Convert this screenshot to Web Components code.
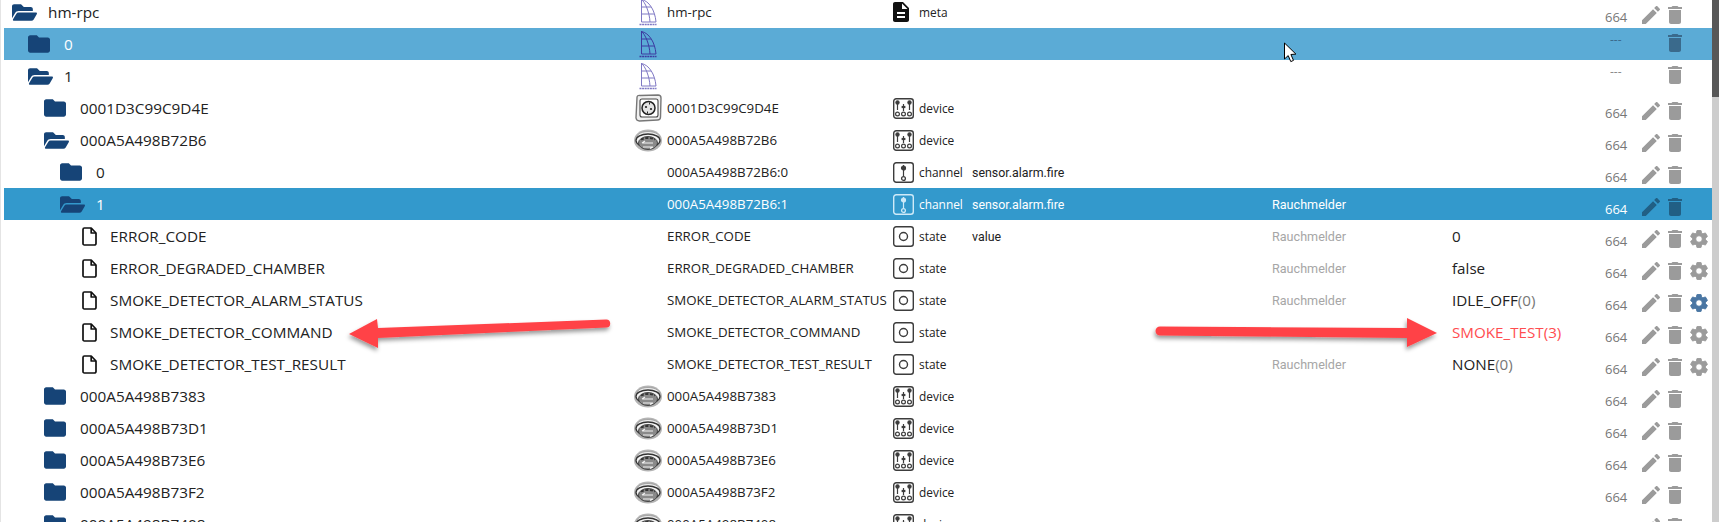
<!DOCTYPE html>
<html>
<head>
<meta charset="utf-8">
<title>Objects</title>
<style>
  html, body { margin: 0; height: 100%; overflow: hidden; background: #fff; }
  body { font-family: "Open Sans", "Liberation Sans", sans-serif; color: #222; }
</style>
</head>
<body>
<object-browser></object-browser>

<script>
const ICONS = {
  folder: `<svg width="22" height="18" viewBox="2 4 20 16" fill="#164477"><path d="M10 4H4c-1.1 0-2 .9-2 2v12c0 1.1.9 2 2 2h16c1.1 0 2-.9 2-2V8c0-1.1-.9-2-2-2h-8l-2-2z"/></svg>`,
  open: `<svg width="25" height="17" viewBox="0 64 576 384" fill="#164477"><path d="M572.694 292.093L500.27 416.248A63.997 63.997 0 0 1 444.989 448H45.025c-18.523 0-30.064-20.093-20.731-36.093l72.424-124.155A64 64 0 0 1 152 256h399.964c18.523 0 30.064 20.093 20.73 36.093zM152 224h328v-48c0-26.51-21.49-48-48-48H272l-64-64H48C21.49 64 0 85.49 0 112v278.046l69.077-118.418C86.214 242.25 117.989 224 152 224z"/></svg>`,
  file: `<svg width="15" height="19" viewBox="0 0 15 19" fill="none" stroke="#111" stroke-width="1.7" stroke-linejoin="round"><path d="M2.4 1h6.8l4.8 5v10.4a1.6 1.6 0 0 1-1.6 1.6H2.4A1.4 1.4 0 0 1 1 16.4V2.4A1.4 1.4 0 0 1 2.4 1z"/><path d="M9.2 1v5h4.8"/></svg>`,
  meta: `<svg width="16" height="20" viewBox="4 2 16 20" fill="#111"><path d="M14 2H6c-1.1 0-1.99.9-1.99 2L4 20c0 1.1.89 2 1.99 2H18c1.1 0 2-.9 2-2V8l-6-6zm2 16H8v-2h8v2zm0-4H8v-2h8v2zm-3-5V3.5L18.5 9H13z"/></svg>`,
  device: `<svg width="21" height="21" viewBox="0 0 21 21" fill="none" stroke="currentColor" stroke-width="1.2"><rect x="0.7" y="0.7" width="19.6" height="19.6" rx="2.5" stroke-width="1.4"/><path d="M4.5 3v9M10.5 6v7M16.5 3v9"/><circle cx="4.5" cy="4.5" r="1.6" fill="currentColor"/><path d="M8.6 9h3.8" stroke-width="2.2"/><circle cx="16.5" cy="4.5" r="1.6" fill="currentColor"/><circle cx="4.5" cy="16" r="1.9"/><circle cx="10.5" cy="16" r="1.9"/><circle cx="16.5" cy="16" r="1.9"/></svg>`,
  channel: `<svg width="21" height="21" viewBox="0 0 21 21" fill="none" stroke="currentColor" stroke-width="1.2"><rect x="0.7" y="0.7" width="19.6" height="19.6" rx="2.5" stroke-width="1.4"/><path d="M10.5 3v11"/><circle cx="10.5" cy="6" r="2" fill="currentColor"/><circle cx="10.5" cy="16.5" r="1.9" stroke-width="1.3"/></svg>`,
  state: `<svg width="21" height="21" viewBox="0 0 21 21" fill="none" stroke="currentColor"><rect x="0.7" y="0.7" width="19.6" height="19.6" rx="2.5" stroke-width="1.4"/><circle cx="10.5" cy="10.5" r="4" stroke-width="1.4"/></svg>`,
  edit: `<svg width="18" height="18" viewBox="3 3 18 18" fill="currentColor"><path d="M3 17.25V21h3.75L17.81 9.94l-3.75-3.75L3 17.25zM20.71 7.04c.39-.39.39-1.02 0-1.41l-2.34-2.34c-.39-.39-1.02-.39-1.41 0l-1.83 1.83 3.75 3.75 1.83-1.83z"/></svg>`,
  trash: `<svg width="14" height="18" viewBox="5 3 14 18" fill="currentColor"><path d="M6 19c0 1.1.9 2 2 2h8c1.1 0 2-.9 2-2V7H6v12zM19 4h-3.5l-1-1h-5l-1 1H5v2h14V4z"/></svg>`,
  gear: `<svg width="18" height="18" viewBox="2.5 2 19 20" fill="currentColor" stroke="currentColor" stroke-width="1"><path d="M19.14 12.94c.04-.3.06-.61.06-.94 0-.32-.02-.64-.07-.94l2.03-1.58c.18-.14.23-.41.12-.61l-1.92-3.32c-.12-.22-.37-.29-.59-.22l-2.39.96c-.5-.38-1.03-.7-1.62-.94l-.36-2.54c-.04-.24-.24-.41-.48-.41h-3.84c-.24 0-.43.17-.47.41l-.36 2.54c-.59.24-1.13.57-1.62.94l-2.39-.96c-.22-.08-.47 0-.59.22L2.74 8.87c-.12.21-.08.47.12.61l2.03 1.58c-.05.3-.09.63-.09.94s.02.64.07.94l-2.03 1.58c-.18.14-.23.41-.12.61l1.92 3.32c.12.22.37.29.59.22l2.39-.96c.5.38 1.03.7 1.62.94l.36 2.54c.05.24.24.41.48.41h3.84c.24 0 .44-.17.47-.41l.36-2.54c.59-.24 1.13-.56 1.62-.94l2.39.96c.22.08.47 0 .59-.22l1.92-3.32c.12-.22.07-.47-.12-.61l-2.01-1.58zM12 15.6c-1.98 0-3.6-1.62-3.6-3.6s1.62-3.6 3.6-3.6 3.6 1.62 3.6 3.6-1.62 3.6-3.6 3.6z"/></svg>`,
  logo: `<svg width="20" height="28" viewBox="0 0 20 28" fill="none" stroke="var(--logo, #7f78c4)" stroke-width="1"><path d="M3.5 1v23h14.5M3.5 1.500C11 3 17 12 18 24M3.5 1.500C7 4 11.5 14 12 24M3.5 9h9.500M3.5 16h13"/><path d="M1.500 26.500h17" stroke-width="1.600" stroke-dasharray="2 0.600"/></svg>`,
  socket: `<svg width="28" height="28" viewBox="0 0 28 28"><path d="M3 3.500Q3 1 6 1.500L24 1q3 0 3 3l-.5 19q0 3-3 3l-18 1q-3 0-3.500-3z" fill="#f0f0f0" stroke="#777" stroke-width="1.400"/><rect x="6" y="5" width="18" height="18" rx="2" fill="#fff" stroke="#444" stroke-width="1.100"/><circle cx="14.500" cy="14" r="6.500" fill="#e4e4e4" stroke="#222" stroke-width="1.500"/><circle cx="12" cy="13" r="1.100" fill="#222"/><circle cx="17" cy="15" r="1.100" fill="#222"/><path d="M15.500 8.500v2M13.500 17.500v2" stroke="#222"/></svg>`,
  smoke: `<svg width="28" height="24" viewBox="0 0 28 24"><ellipse cx="14" cy="12.500" rx="14" ry="11" fill="#b4b4b4"/><path d="M2.500 9.500C4 1.500 24 1.500 26 9.500c-6-4-18-4-23.500 0z" fill="#ededed" stroke="#999" stroke-width="0.800"/><ellipse cx="14" cy="12.500" rx="12" ry="6.500" fill="#f4f4f4" stroke="#333" stroke-width="1.300"/><ellipse cx="14" cy="15" rx="9.500" ry="6.500" fill="#8a8a8a" stroke="#3a3a3a" stroke-width="0.900"/><path d="M7 11.500c4-2 10-2 14 0" fill="none" stroke="#333" stroke-width="1.800" stroke-dasharray="3 1.500"/><path d="M8 15h11M8 15l3-2M9 19h10l-3 1.500" fill="none" stroke="#f2f2f2" stroke-width="1.100"/></svg>`
};

class ScrollBar extends HTMLElement {
  constructor() {
    super();
    this.attachShadow({ mode: "open" });
    this.shadowRoot.innerHTML = `
      <style>
        :host { display: block; width: 7px; background: #cdcdcd; flex: none; }
        div { height: 97px; background: #585858; }
      </style>
      <div></div>`;
  }
}
customElements.define("scroll-bar", ScrollBar);

class ObjectRow extends HTMLElement {
  constructor() {
    super();
    this.attachShadow({ mode: "open" });
  }

  set data(d) {
    const pad = 8 + d.level * 16;
    const isLeaf = d.kind === "file";
    const actionShift = d.edit === false ? -1 : 3;
    this.className = d.style || "";
    this.shadowRoot.innerHTML = `
      <style>
        :host {
          display: grid;
          grid-template-columns: 630px 33px 226px 26px 53px 300px 180px 153px 37px 72px;
          height: 32px;
          align-items: center;
          white-space: nowrap;
          color: #222;
          --trash: #9b9b9b;
        }
        :host(.hover) { background: #5babd6; color: #fff; --trash: #3a6a8c; --muted: #fff; --logo: #3c3aa0; }
        :host(.selected) { background: #3399cc; color: #fff; --trash: #215f84; --muted: #fff; }
        .name { display: flex; align-items: center; font-size: 15.3px; padding-left: ${pad}px; }
        .name .ic { width: ${isLeaf ? 28 : 36}px; display: flex; margin-left: ${isLeaf ? 6 : 0}px; }
        .pic { display: flex; justify-content: center; width: 28px; }
        .id { font-size: 13.3px; }
        .type-ic { display: flex; color: #3c3c3c; }
        :host(.selected) .type-ic { color: #cfeaf8; }
        .type { font-size: 11.9px; }
        .role { font-family: Roboto, "Open Sans", sans-serif; font-size: 12.4px; }
        .room { font-family: Roboto, "Open Sans", sans-serif; font-size: 12.6px; color: var(--muted, #a6a6a6); }
        .value { font-size: 15.2px; }
        .value i { font-style: normal; color: #777; }
        .value.alert, .value.alert i { color: #ff4d50; }
        .mode { font-size: 13px; color: var(--muted, #777); position: relative; top: 5px; }
        .dash { font-size: 12px; color: #8a8a8a; margin-left: 5px; position: relative; top: -5px; }
        :host(.hover) .dash, :host(.selected) .dash { color: #3a6a8c; }
        .acts { display: flex; align-items: center; gap: 8px; position: relative; top: ${actionShift}px; color: #9b9b9b; }
        :host(.selected) .acts { color: #215f84; }
        .acts .p { width: 18px; display: flex; }
        .acts .t { display: flex; color: var(--trash); }
        .acts .g { display: flex; color: ${d.gearOn ? "#4a76a3" : "#9b9b9b"}; }
      </style>
      <div class="name"><span class="ic">${ICONS[d.kind]}</span><span>${d.name}</span></div>
      <div class="pic">${d.pic ? ICONS[d.pic] : ""}</div>
      <div class="id">${d.id || ""}</div>
      <div class="type-ic">${d.type ? ICONS[d.typeIcon] : ""}</div>
      <div class="type">${d.type || ""}</div>
      <div class="role">${d.role || ""}</div>
      <div class="room">${d.room || ""}</div>
      <div class="value ${d.alert ? "alert" : ""}">${d.value || ""}</div>
      ${d.edit === false ? `<div class="dash">---</div>` : `<div class="mode">664</div>`}
      <div class="acts">
        <span class="p">${d.edit === false ? "" : ICONS.edit}</span>
        <span class="t">${ICONS.trash}</span>
        ${d.gear ? `<span class="g">${ICONS.gear}</span>` : ""}
      </div>`;
  }
}
customElements.define("object-row", ObjectRow);

class ObjectBrowser extends HTMLElement {
  constructor() {
    super();
    this.attachShadow({ mode: "open" });
    this.shadowRoot.innerHTML = `
      <style>
        :host { display: flex; height: 522px; position: relative; overflow: hidden; background: #fff; }
        .list { flex: 1; margin-top: -4px; padding-left: 4px; min-width: 0; box-shadow: inset 1px 0 0 #e4e4e4; }
        svg.overlay { position: absolute; left: 0; top: 0; pointer-events: none; }
      </style>
      <div class="list"></div>
      <scroll-bar></scroll-bar>
      <svg class="overlay" width="1719" height="522" viewBox="0 0 1719 522">
        <defs>
          <filter id="sh" x="-5%" y="-50%" width="110%" height="200%">
            <feDropShadow dx="-1" dy="3" stdDeviation="2" flood-color="#000" flood-opacity="0.4"/>
          </filter>
        </defs>
        <g fill="#ff4347" filter="url(#sh)">
          <path d="M349 334L377 319L378 328L606 319.5a4 4 0 0 1 .4 8L378 338L378 348z"/>
          <path d="M1437 333L1407 318L1407 328L1160 326.5a4.5 4.5 0 0 0 0 9L1407 338L1407 347z"/>
        </g>
        <path d="M1284.5 43v16l3.7-3.4 2.6 6 2.7-1.2-2.6-5.9 5-.4z" fill="#fff" stroke="#000" stroke-width="1"/>
      </svg>`;
  }

  connectedCallback() {
    const list = this.shadowRoot.querySelector(".list");
    const smoke = (id) => ({ level: 2, kind: "folder", name: id, pic: "smoke", id, type: "device", typeIcon: "device" });
    const state = (name, value, extra) => Object.assign({ level: 4, kind: "file", name, id: name, type: "state", typeIcon: "state", room: "Rauchmelder", value, gear: true }, extra);
    const rows = [
      { level: 0, kind: "open", name: "hm-rpc", pic: "logo", id: "hm-rpc", type: "meta", typeIcon: "meta" },
      { level: 1, kind: "folder", name: "0", pic: "logo", edit: false, style: "hover" },
      { level: 1, kind: "open", name: "1", pic: "logo", edit: false },
      { level: 2, kind: "folder", name: "0001D3C99C9D4E", pic: "socket", id: "0001D3C99C9D4E", type: "device", typeIcon: "device" },
      Object.assign(smoke("000A5A498B72B6"), { kind: "open" }),
      { level: 3, kind: "folder", name: "0", id: "000A5A498B72B6:0", type: "channel", typeIcon: "channel", role: "sensor.alarm.fire" },
      { level: 3, kind: "open", name: "1", id: "000A5A498B72B6:1", type: "channel", typeIcon: "channel", role: "sensor.alarm.fire", room: "Rauchmelder", style: "selected" },
      state("ERROR_CODE", "0", { role: "value" }),
      state("ERROR_DEGRADED_CHAMBER", "false"),
      state("SMOKE_DETECTOR_ALARM_STATUS", "IDLE_OFF<i>(0)</i>", { gearOn: true }),
      state("SMOKE_DETECTOR_COMMAND", "SMOKE_TEST<i>(3)</i>", { room: "", alert: true }),
      state("SMOKE_DETECTOR_TEST_RESULT", "NONE<i>(0)</i>"),
      smoke("000A5A498B7383"),
      smoke("000A5A498B73D1"),
      smoke("000A5A498B73E6"),
      smoke("000A5A498B73F2"),
      smoke("000A5A498B7408")
    ];
    for (const r of rows) {
      const row = document.createElement("object-row");
      row.data = r;
      list.appendChild(row);
    }
  }
}
customElements.define("object-browser", ObjectBrowser);
</script>
</body>
</html>
